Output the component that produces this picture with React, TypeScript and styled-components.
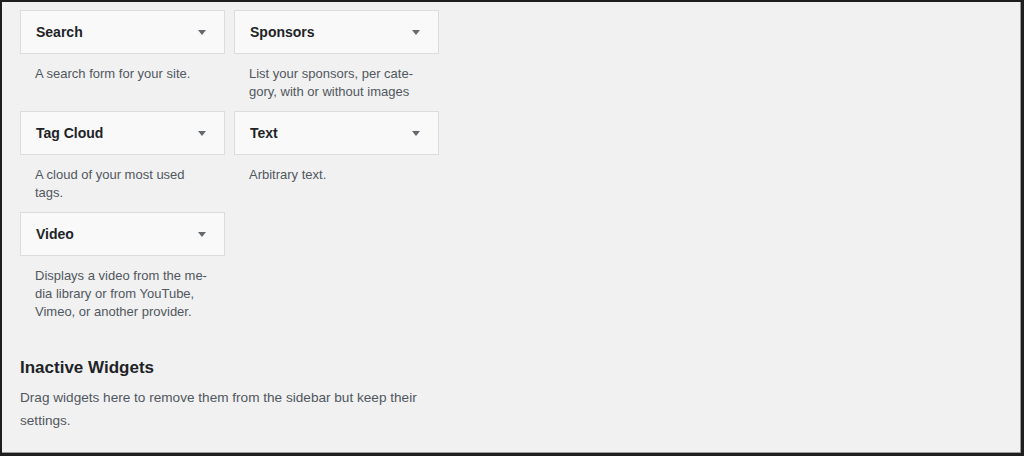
import React from 'react';
import styled, { createGlobalStyle } from 'styled-components';

const GlobalStyle = createGlobalStyle`
  html, body {
    margin: 0;
    padding: 0;
    background: #1e1e1e;
  }
  body {
    font-family: "Liberation Sans", Arial, sans-serif;
    -webkit-font-smoothing: antialiased;
  }
`;

const Frame = styled.div`
  box-sizing: border-box;
  width: 1024px;
  height: 456px;
  border-top: 2px solid #1e1e1e;
  border-left: 2px solid #1e1e1e;
  border-right: 3px solid #1e1e1e;
  border-bottom: 3px solid #1e1e1e;
  background: #f1f1f1;
  overflow: hidden;
`;

const Inner = styled.div`
  box-sizing: border-box;
  height: 100%;
  border-right: 1px solid #9a9a9a;
  border-bottom: 1px solid #9a9a9a;
  padding: 8px 0 0 18px;
`;

const WidgetGrid = styled.div`
  display: grid;
  grid-template-columns: 205px 205px;
  column-gap: 9px;
  row-gap: 0;
`;

const WidgetItem = styled.div`
  min-height: 101px;
`;

const WidgetTop = styled.div`
  box-sizing: border-box;
  height: 44px;
  display: flex;
  align-items: center;
  justify-content: space-between;
  padding: 0 18px 0 15px;
  background: #f9f9f9;
  border: 1px solid #dcdcde;
`;

const WidgetTitle = styled.h3`
  margin: 0;
  font-size: 14px;
  font-weight: 700;
  color: #1d2327;
`;

const Arrow = styled.span`
  width: 0;
  height: 0;
  border-left: 4px solid transparent;
  border-right: 4px solid transparent;
  border-top: 5px solid #646970;
`;

const WidgetDesc = styled.p`
  margin: 11px 0 0 15px;
  width: 180px;
  font-size: 13px;
  line-height: 18px;
  color: #50575e;
`;

const Section = styled.div`
  margin-top: 35px;
`;

const SectionTitle = styled.h2`
  margin: 0;
  font-size: 17px;
  font-weight: 600;
  color: #1d2327;
  line-height: 24px;
`;

const SectionText = styled.p`
  margin: 6px 0 0;
  width: 420px;
  font-size: 13.6px;
  line-height: 23px;
  color: #50575e;
`;

const widgets = [
  { title: 'Search', desc: 'A search form for your site.' },
  { title: 'Sponsors', desc: 'List your sponsors, per cate-\ngory, with or without images' },
  { title: 'Tag Cloud', desc: 'A cloud of your most used\ntags.' },
  { title: 'Text', desc: 'Arbitrary text.' },
  { title: 'Video', desc: 'Displays a video from the me-\ndia library or from YouTube,\nVimeo, or another provider.' },
];

const App = () => {
  return (
    <>
      <GlobalStyle />
      <Frame>
        <Inner>
          <WidgetGrid>
            {widgets.map((w) => (
              <WidgetItem key={w.title}>
                <WidgetTop>
                  <WidgetTitle>{w.title}</WidgetTitle>
                  <Arrow />
                </WidgetTop>
                <WidgetDesc>
                  {w.desc.split('\n').map((line, i) => (
                    <React.Fragment key={i}>
                      {i > 0 && <br />}
                      {line}
                    </React.Fragment>
                  ))}
                </WidgetDesc>
              </WidgetItem>
            ))}
          </WidgetGrid>
          <Section>
            <SectionTitle>Inactive Widgets</SectionTitle>
            <SectionText>
              Drag widgets here to remove them from the sidebar but keep their settings.
            </SectionText>
          </Section>
        </Inner>
      </Frame>
    </>
  );
};

export default App;
